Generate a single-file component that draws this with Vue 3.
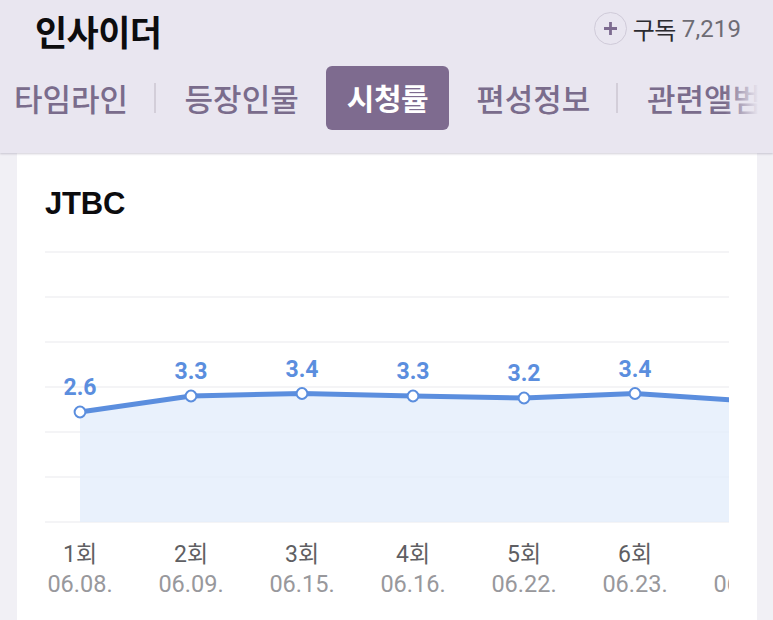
<script setup>
const tabs = [
  { label: '타임라인', cls: 'first' },
  { sep: true, cls: 'sep-a' },
  { label: '등장인물' },
  { label: '시청률', cls: 'active' },
  { label: '편성정보' },
  { sep: true, cls: 'sep-b' },
  { label: '관련앨범' },
]
const gridYs = [252, 297, 342, 387, 432, 477, 522]
const pts = [
  { x: 35, y: 412, v: '2.6', n: '1회', d: '06.08.' },
  { x: 146, y: 396, v: '3.3', n: '2회', d: '06.09.' },
  { x: 257, y: 393.5, v: '3.4', n: '3회', d: '06.15.' },
  { x: 368, y: 396, v: '3.3', n: '4회', d: '06.16.' },
  { x: 479, y: 398, v: '3.2', n: '5회', d: '06.22.' },
  { x: 590, y: 393.5, v: '3.4', n: '6회', d: '06.23.' },
  { x: 701, y: 401, v: '', n: '7회', d: '06.29.' },
]
const top = 240
const line = pts.map(p => `${p.x},${p.y - top}`).join(' ')
const area = `35,${522 - top} ${line} 701,${522 - top}`
</script>

<template>
  <div class="page">
    <header class="head">
      <div class="title-row">
        <h1 class="title">인사이더</h1>
        <div class="sub">
          <span class="plus">
            <svg width="33" height="33" viewBox="0 0 33 33">
              <circle cx="16.5" cy="16.5" r="16" fill="none" stroke="#cfcad8" stroke-width="1" />
              <path d="M10 16.5H23M16.5 10V23" stroke="#7d6b90" stroke-width="2.8" fill="none" />
            </svg>
          </span>
          <span class="sub-label">구독</span>
          <span class="sub-num">7,219</span>
        </div>
      </div>
      <nav class="tabs">
        <template v-for="(t, i) in tabs" :key="i">
          <i v-if="t.sep" class="sep" :class="t.cls"></i>
          <span v-else class="tab" :class="t.cls">{{ t.label }}</span>
        </template>
        <span class="fade"></span>
      </nav>
    </header>
    <main class="card">
      <h2 class="net">JTBC</h2>
      <svg class="chart" width="684" height="370" viewBox="0 0 684 370">
        <line v-for="y in gridYs" :key="y" x1="0" x2="684" :y1="y - top" :y2="y - top" stroke="#f0f0f3" stroke-width="1.5" />
        <polygon :points="area" fill="#e3edfb" fill-opacity="0.8" />
        <polyline :points="line" fill="none" stroke="#5b8ede" stroke-width="5" />
        <g v-for="p in pts" :key="p.n">
          <circle v-if="p.v" :cx="p.x" :cy="p.y - top" r="5.4" fill="#fff" stroke="#5b8ede" stroke-width="2" />
          <text v-if="p.v" class="val" :x="p.x" :y="p.y - top - 17" text-anchor="middle">{{ p.v }}</text>
          <text class="ep" :x="p.x" :y="322" text-anchor="middle">{{ p.n }}</text>
          <text class="date" :x="p.x" :y="352" text-anchor="middle">{{ p.d }}</text>
        </g>
      </svg>
    </main>
  </div>
</template>

<style scoped>
.page {
  width: 773px;
  height: 620px;
  overflow: hidden;
  background: #f1f0f5;
  font-family: Roboto, "Noto Sans CJK KR", sans-serif;
}
.head {
  position: relative;
  z-index: 1;
  height: 153px;
  box-sizing: border-box;
  background: #e9e6f0;
  box-shadow: 0 1px 2px rgba(90, 80, 110, 0.28);
  overflow: hidden;
}
.title-row {
  height: 66px;
  display: flex;
  justify-content: space-between;
  align-items: flex-start;
  padding: 0 32px 0 35px;
}
.title {
  margin: 6px 0 0;
  font-size: 35px;
  line-height: 50px;
  font-weight: 700;
  color: #0c0c0e;
  font-family: "Noto Sans CJK KR", sans-serif;
  letter-spacing: -0.6px;
}
.sub {
  display: flex;
  align-items: center;
  margin-top: 12px;
  height: 33px;
  font-size: 24px;
}
.plus {
  display: flex;
  margin-right: 6px;
}
.sub-label {
  color: #2c2b30;
  font-family: "Noto Sans CJK KR", sans-serif;
  letter-spacing: -0.6px;
  margin-right: 6px;
}
.sub-num {
  color: #6e6c74;
  letter-spacing: 0.1px;
}
.tabs {
  display: flex;
  align-items: center;
  height: 64px;
  padding-left: 14px;
  white-space: nowrap;
  position: relative;
}
.tab {
  flex: none;
  padding: 0 22px;
  height: 64px;
  line-height: 64px;
  font-size: 31px;
  font-weight: 500;
  letter-spacing: 0;
  color: #7a6c8c;
  font-family: "Noto Sans CJK KR", sans-serif;
}
.tab.first {
  padding-left: 0;
}
.tab.active {
  margin: 0 5px 0 5px;
  padding: 0 21px;
  background: #7e6b8f;
  color: #fff;
  border-radius: 6px;
  line-height: 62px;
  font-size: 30px;
  font-weight: 700;
  letter-spacing: -0.4px;
}
.sep {
  flex: none;
  width: 1.5px;
  height: 30px;
  background: #d3ced9;
}
.sep-a {
  margin: 0 7px 0 4px;
}
.sep-b {
  margin: 0 7px 0 4px;
}
.fade {
  position: absolute;
  right: 0;
  top: 0;
  width: 48px;
  height: 64px;
  background: linear-gradient(90deg, rgba(233, 230, 240, 0), #e9e6f0 70%);
}
.card {
  box-sizing: border-box;
  width: 740px;
  height: 467px;
  margin-left: 17px;
  padding: 28px 28px 0;
  background: #fff;
  overflow: hidden;
}
.net {
  margin: 0;
  font-family: "Liberation Sans", sans-serif;
  font-size: 31px;
  line-height: 46px;
  font-weight: 700;
  color: #0c0c0e;
  letter-spacing: -0.2px;
}
.chart {
  display: block;
  margin-top: 13px;
}
.val {
  font-family: Roboto, sans-serif;
  font-size: 23px;
  font-weight: 700;
  fill: #5b8ede;
}
.ep {
  font-family: Roboto, "Noto Sans CJK KR", sans-serif;
  font-size: 23px;
  fill: #5f5f63;
}
.date {
  font-family: Roboto, sans-serif;
  font-size: 23.5px;
  fill: #98989c;
}
</style>
